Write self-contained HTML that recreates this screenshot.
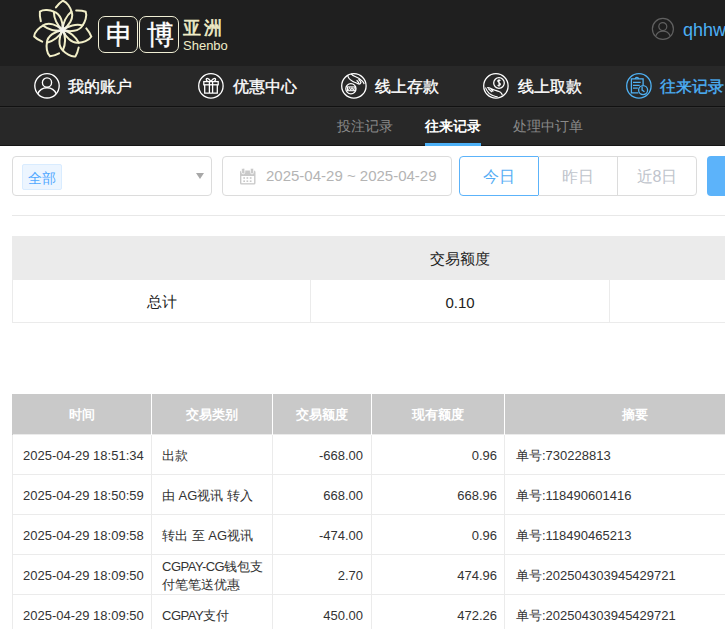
<!DOCTYPE html>
<html><head><meta charset="utf-8">
<style>
*{box-sizing:border-box;margin:0;padding:0}
html,body{width:725px;height:629px;overflow:hidden;background:#fff}
body{font-family:"Liberation Sans",sans-serif;position:relative;color:#333}
.abs{position:absolute;white-space:nowrap}
#hdr{position:absolute;left:0;top:0;width:725px;height:66px;background:#1f1f1f}
#nav{position:absolute;left:0;top:66px;width:725px;height:40px;background:#282828}
#sub{position:absolute;left:0;top:106px;width:725px;height:40px;background:#282828;border-top:1px solid #111}
#sub:before{content:"";position:absolute;left:0;top:0;width:100%;height:1px;background:#303030}
#sub:after{content:"";position:absolute;left:0;bottom:0;width:100%;height:1px;background:#161616}
.box{position:absolute;top:16px;width:40px;height:37px;border:1.5px solid #f0eed4;border-radius:7px;color:#fff;font-size:27px;line-height:36px;padding-left:2px;-webkit-text-stroke:0.4px #fff;text-align:center}
.nv{position:absolute;top:67px;height:40px;line-height:40px;font-size:16px;color:#fff;-webkit-text-stroke:0.35px currentColor}
.ic{position:absolute;top:73px;width:26px;height:26px;overflow:visible}
.st{position:absolute;top:106px;height:40px;line-height:40px;font-size:14px;color:#8a8a8a}
.inp{position:absolute;top:156px;height:40px;border:1px solid #dcdcdc;border-radius:4px;background:#fff}
.btn{position:absolute;top:156px;height:40px;line-height:40px;font-size:16px;color:#c0c4cc;text-align:center}
table{border-collapse:collapse;position:absolute;table-layout:fixed}
#sum{left:12px;top:236px;width:896px}
#sum td{height:43px;border:1px solid #ebebeb;text-align:center;font-size:15px;color:#222;padding-top:2px}
#sum tr.h td{background:#ebebeb;border-color:#ebebeb}
#main{left:12px;top:394px;width:900px}
#main th{height:40px;padding-top:2px;background:#c9c9c9;color:#fff;font-size:13px;font-weight:bold;border-left:1px solid #fff;text-align:center}
#main th:first-child{border-left:1px solid #c9c9c9}
#main td{height:40px;border:1px solid #ebebeb;font-size:13px;color:#333;padding:2px 10px 0;line-height:19px;white-space:nowrap;overflow:hidden}
#main td.z{padding-left:11px}
#main td.r{text-align:right;padding-right:8px}
#main td.r4{text-align:right;padding-right:7px}
</style></head><body>
<div id="hdr"></div>
<div id="nav"></div>
<div id="sub"></div>

<!-- logo -->
<svg class="abs" style="left:0px;top:0px" width="100" height="62" viewBox="0 0 100 62">
  <defs><g id="pt"><path d="M0,0 C6,-4 11.5,-12 8.75,-18.4 C7.8,-22 4.5,-28 0.1,-29.3 C-2,-28 -5,-25 -6.8,-22.6"/><path d="M0,0 C-0.5,-7 4,-14.5 8.75,-18.4"/></g>
  <g id="fl"><use href="#pt"/><use href="#pt" transform="rotate(51.43)"/><use href="#pt" transform="rotate(102.86)"/><use href="#pt" transform="rotate(154.29)"/><use href="#pt" transform="rotate(205.71)"/><use href="#pt" transform="rotate(257.14)"/><use href="#pt" transform="rotate(308.57)"/></g>
  <radialGradient id="rg"><stop offset="0" stop-color="#fff" stop-opacity="1"/><stop offset="0.5" stop-color="#fff" stop-opacity="0.6"/><stop offset="1" stop-color="#fff" stop-opacity="0"/></radialGradient>
  <mask id="mk"><circle cx="62.75" cy="30" r="9" fill="url(#rg)"/></mask></defs>
  <g fill="none" stroke="#f2efc8" stroke-width="2" stroke-linecap="round" transform="translate(62.75,30)"><use href="#fl"/></g>
  <g mask="url(#mk)"><g fill="none" stroke="#f4f4f4" stroke-width="2" stroke-linecap="round" transform="translate(62.75,30)"><use href="#fl"/><circle r="2.2" fill="#f2f2f2" stroke="none"/></g></g>
</svg>
<div class="box" style="left:98px">申</div>
<div class="box" style="left:139px">博</div>
<div class="abs" style="left:183px;top:16px;font-size:18px;color:#f0edc8;line-height:24px;letter-spacing:3px;-webkit-text-stroke:0.6px #f0edc8">亚洲</div>
<div class="abs" style="left:183px;top:38px;font-size:13px;color:#f0edc8;line-height:16px">Shenbo</div>

<!-- user -->
<svg class="abs" style="left:651px;top:17px;overflow:visible" width="24" height="24" viewBox="0 0 24 24">
  <g fill="none" stroke="#606060" stroke-width="1.2"><circle cx="11.9" cy="11.9" r="10.5"/><circle cx="11.8" cy="9.6" r="4"/><path d="M4.7,18.9 A7.84,7.84 0 0 1 19.2,18.9"/></g>
</svg>
<div class="abs" style="left:683px;top:18px;font-size:18px;color:#4cb0f6;line-height:24px">qhhw</div>

<!-- nav -->
<svg class="ic" style="left:34px" viewBox="0 0 26 26"><g fill="none" stroke="#fff" stroke-width="1.35"><circle cx="13" cy="12.8" r="12.2"/><circle cx="13" cy="9.5" r="4.6"/><path d="M3.7,20.9 A10.1,10.1 0 0 1 22.3,20.9"/></g></svg>
<div class="nv" style="left:68px">我的账户</div>
<svg class="ic" style="left:198px" viewBox="0 0 26 26"><g fill="none" stroke="#fff" stroke-width="1.3"><circle cx="12.9" cy="12.9" r="12.2"/><rect x="5.8" y="8.6" width="14.4" height="3.2"/><path d="M6.7,11.8 V20.2 H19.3 V11.8 M11.4,8.6 V20.2 M14.6,8.6 V20.2"/><path d="M12.9,8.4 C11.5,6.5 9.5,5 8.6,5.6 C7.8,6.2 8.5,8 9.5,8.4 M12.9,8.4 C14.3,6.5 16.3,5 17.2,5.6 C18,6.2 17.3,8 16.3,8.4"/></g></svg>
<div class="nv" style="left:233px">优惠中心</div>
<svg class="ic" style="left:340px" viewBox="0 0 26 26"><g fill="none" stroke="#fff" stroke-width="1.3"><circle cx="13.9" cy="12.9" r="12.2"/><circle cx="10.9" cy="15.75" r="5.1"/><rect x="7.5" y="13.9" width="7.6" height="3.8" stroke-width="1.1"/><path d="M8.4,17.2 L9.6,14.5 L10.8,17.2 L12,14.5 L13.2,17.2 L14.3,14.5" stroke-width="0.9"/><path d="M7.7,2.3 C8,5 10,6.8 12.5,8.2 C14.5,9.3 16.5,10 18.5,11 M11.2,0.8 C12,2 13.5,3 15.7,3.8 C18.5,4.8 21,6.3 22.6,8.4 C23.5,9.5 24,10.5 24.1,11.1 M16.6,7.2 C17.6,8 18.4,9 18.9,10.2 M18.4,6.3 C19.6,7.2 20.4,8.4 21,9.6 C20.5,10.8 19.5,11.2 18.5,11" stroke-width="1.2"/></g></svg>
<div class="nv" style="left:375px">线上存款</div>
<svg class="ic" style="left:483px" viewBox="0 0 26 26"><g fill="none" stroke="#fff" stroke-width="1.3"><circle cx="12.9" cy="12.9" r="12.2"/><circle cx="16" cy="10" r="5.3"/><path d="M17.4,7.8 C17,7 15,6.8 14.7,8 C14.4,9.3 17.6,9.8 17.4,11.4 C17.2,12.8 15,12.8 14.5,12 M16,6.3 V13.7" stroke-width="1.1"/><path d="M2.5,14.5 C2.8,16 3.5,17.5 6.1,20.4 C7.5,21.5 9,22.3 10.4,22.8 C12,23.4 13.5,23.7 14.7,23.75 M4.2,14.7 C5.5,14.6 6.5,14.8 7.5,15.2 C9,15.8 10.5,16.6 11.8,17.1 C13.5,17.6 15,18 16.1,18.5 C17.3,19 18.2,19.7 18.5,20.4 C19,21 19.2,21.6 19.2,22.3 M5.2,15.6 L9,19 M7.5,15.4 L10.4,18.5" stroke-width="1.2"/></g></svg>
<div class="nv" style="left:518px">线上取款</div>
<svg class="ic" style="left:626px" viewBox="0 0 26 26"><g fill="none" stroke="#4fb0f2" stroke-width="1.3"><circle cx="12.9" cy="12.9" r="12.2"/><path d="M12.4,19.9 H5.4 V5.9 H17.1 V12.2"/><path d="M9.3,5.9 A1.6,1.6 0 0 1 12.5,5.9"/><path d="M7,9.4 H14.7 M7,12.3 H13.7 M7,15.2 H11.8"/><circle cx="17.1" cy="17.1" r="4.5"/><path d="M16.1,13.6 V17.1 L18.5,18.7"/></g></svg>
<div class="nv" style="left:660px;color:#4cb0f6">往来记录</div>

<!-- sub nav -->
<div class="st" style="left:337px">投注记录</div>
<div class="st" style="left:425px;color:#fff;font-weight:bold">往来记录</div>
<div class="abs" style="left:425px;top:143px;width:56px;height:3px;background:#4cb0f6"></div>
<div class="st" style="left:513px">处理中订单</div>

<!-- filters -->
<div class="inp" style="left:12px;width:200px"></div>
<div class="abs" style="left:22px;top:164px;width:40px;height:26px;background:#ecf5ff;border:1px solid #d9ecff;border-radius:2px;color:#50a8ff;font-size:14px;line-height:26px;text-align:center">全部</div>
<div class="abs" style="left:196px;top:173px;width:0;height:0;border-left:4px solid transparent;border-right:4px solid transparent;border-top:6px solid #a8a8a8"></div>
<div class="inp" style="left:222px;width:230px"></div>
<svg class="abs" style="left:235px;top:164px" width="25" height="25" viewBox="235 164 25 25"><rect x="240" y="170.5" width="15.5" height="14" rx="1.5" fill="#c9c9c9"/><rect x="241.4" y="176" width="12.7" height="7.2" fill="#fff"/><g fill="#c9c9c9"><rect x="243.3" y="177.2" width="1.7" height="1.6"/><rect x="246.5" y="177.2" width="1.7" height="1.6"/><rect x="249.8" y="177.2" width="1.7" height="1.6"/><rect x="243.3" y="180.4" width="1.7" height="1.6"/><rect x="246.5" y="180.4" width="1.7" height="1.6"/><rect x="249.8" y="180.4" width="1.7" height="1.6"/></g><rect x="241.6" y="168.2" width="3.2" height="5.6" rx="1.4" fill="#c9c9c9" stroke="#fff" stroke-width="0.8"/><rect x="250.4" y="168.2" width="3.2" height="5.6" rx="1.4" fill="#c9c9c9" stroke="#fff" stroke-width="0.8"/></svg>
<div class="abs" style="left:266px;top:156px;font-size:15px;line-height:40px;color:#b4b4b4">2025-04-29 ~ 2025-04-29</div>

<div class="btn" style="left:459px;width:80px;border:1px solid #5cb3fa;border-radius:4px 0 0 4px;color:#55aef5">今日</div>
<div class="btn" style="left:538px;width:80px;border:1px solid #dcdcdc;border-left:0">昨日</div>
<div class="btn" style="left:617px;width:80px;border:1px solid #dcdcdc;border-radius:0 4px 4px 0">近8日</div>
<div class="abs" style="left:707px;top:156px;width:40px;height:40px;background:#5cb3fa;border-radius:4px"></div>

<div class="abs" style="left:12px;top:215px;width:720px;height:1px;background:#e8e8e8"></div>

<!-- summary -->
<table id="sum">
<colgroup><col style="width:298px"><col style="width:299px"><col style="width:299px"></colgroup>
<tr class="h"><td></td><td>交易额度</td><td></td></tr>
<tr><td>总计</td><td>0.10</td><td></td></tr>
</table>

<!-- main table -->
<table id="main">
<colgroup><col style="width:139px"><col style="width:121px"><col style="width:99px"><col style="width:133px"><col style="width:260px"><col style="width:148px"></colgroup>
<tr><th>时间</th><th>交易类别</th><th>交易额度</th><th>现有额度</th><th>摘要</th><th></th></tr>
<tr><td>2025-04-29 18:51:34</td><td>出款</td><td class="r">-668.00</td><td class="r4">0.96</td><td class="z">单号:730228813</td><td></td></tr>
<tr><td>2025-04-29 18:50:59</td><td>由 AG视讯 转入</td><td class="r">668.00</td><td class="r4">668.96</td><td class="z">单号:118490601416</td><td></td></tr>
<tr><td>2025-04-29 18:09:58</td><td>转出 至 AG视讯</td><td class="r">-474.00</td><td class="r4">0.96</td><td class="z">单号:118490465213</td><td></td></tr>
<tr><td>2025-04-29 18:09:50</td><td style="line-height:18px;padding-top:3px"><span style="letter-spacing:-0.5px">CGPAY-CG</span>钱包支<br>付笔笔送优惠</td><td class="r">2.70</td><td class="r4">474.96</td><td class="z">单号:202504303945429721</td><td></td></tr>
<tr><td>2025-04-29 18:09:50</td><td><span style="letter-spacing:-0.5px">CGPAY</span>支付</td><td class="r">450.00</td><td class="r4">472.26</td><td class="z">单号:202504303945429721</td><td></td></tr>
</table>
</body></html>
